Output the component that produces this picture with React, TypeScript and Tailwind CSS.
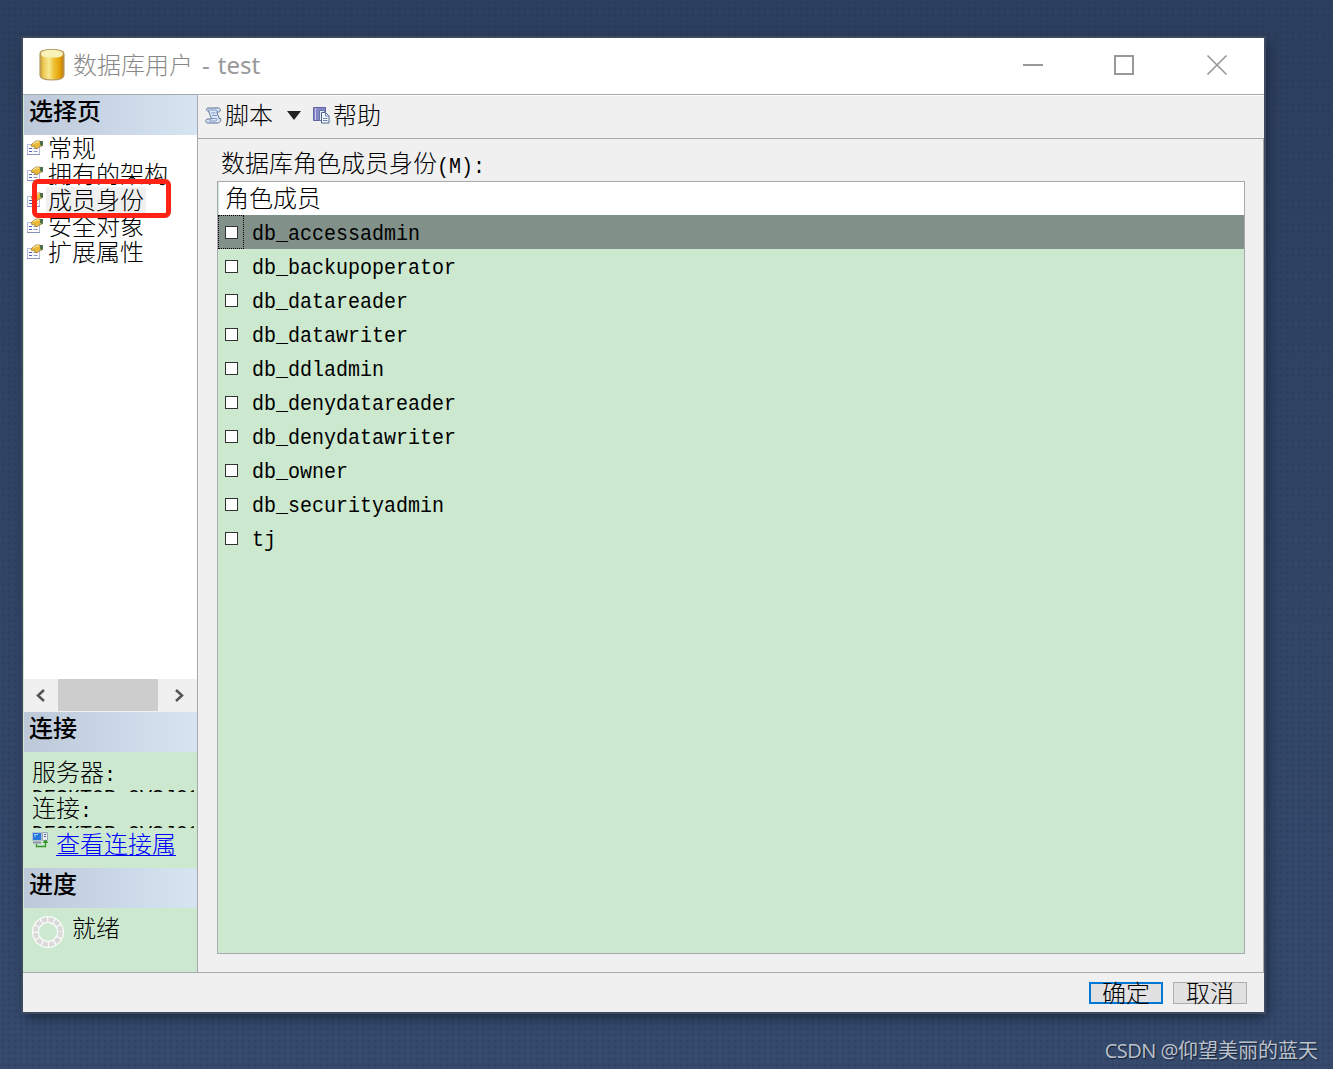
import { ReactNode, useState } from "react";
import clsx from "clsx";

const pages = ["常规", "拥有的架构", "成员身份", "安全对象", "扩展属性"];

const roles = [
  "db_accessadmin",
  "db_backupoperator",
  "db_datareader",
  "db_datawriter",
  "db_ddladmin",
  "db_denydatareader",
  "db_denydatawriter",
  "db_owner",
  "db_securityadmin",
  "tj",
];

const DatabaseIcon = () => (
  <svg width="26" height="34" viewBox="0 0 26 34" className="-translate-y-px">
    <defs>
      <linearGradient id="dbBody">
        <stop offset="0" stopColor="#c99a35" />
        <stop offset="0.15" stopColor="#edcb55" />
        <stop offset="0.38" stopColor="#f7e993" />
        <stop offset="0.55" stopColor="#f0c640" />
        <stop offset="0.82" stopColor="#e5a105" />
        <stop offset="1" stopColor="#b97a18" />
      </linearGradient>
    </defs>
    <path
      d="M1 6C1 3 5 1.500 13 1.500S25 3 25 6v21c0 3-4 5-12 5S1 30 1 27z"
      fill="url(#dbBody)"
      stroke="#b39a68"
      strokeWidth="1.200"
    />
    <path d="M2 6c0-3 5-4 11-4s11 1 11 4-5 3.500-11 3.500S2 9 2 6z" fill="#f8f2b8" />
  </svg>
);

const PageIcon = () => (
  <svg width="17" height="16" viewBox="0 0 17 16" className="shrink-0 translate-x-px">
    <path d="M.5 4.500h12v10H.5z" fill="#fff" stroke="#b3b9d8" />
    <path d="M0 14.500h13" stroke="#8790b8" />
    <path d="M2 8.500h3M2 11.500h3" stroke="#4c61b5" />
    <path d="M6.500 8.500h4M6.500 11.500h4" stroke="#8d97bd" />
    <path
      d="M4 5l2-2 3-2h4l2 1v4l-3 1-2 2-2-1-1-2-2 1z"
      fill="#eab93c"
      stroke="#97752c"
      strokeWidth="0.700"
    />
    <path d="M6 4l3-2h3" stroke="#fff2ac" fill="none" />
    <path d="M13 1h3v5l-3-1z" fill="#4b714c" />
  </svg>
);

const ScriptIcon = () => (
  <svg width="17" height="17" viewBox="0 0 17 17" className="shrink-0">
    <path
      d="M3 1h10.500c2.500 0 2.500 4 0 4H12c0 2.500 2 4 2 6.500h1.500c1 2-.5 4.500-3 4.500H3c-3 0-3-4 0-4h3.500C6 9.500 4 7 4 4.500 1 4.500 1 1 3 1z"
      fill="#dce8f8"
      stroke="#5b6f97"
    />
    <path d="M3 3h8.500M12 3v2M6 6h4.500M7 8.500h5M4 14h6.500c1.500 0 2-2.500.5-2.500H7" stroke="#7d95c0" fill="none" />
  </svg>
);

const HelpIcon = () => (
  <svg width="17" height="17" viewBox="0 0 17 17" className="shrink-0">
    <path d="M.5.5h12v13H.5z" fill="#8585c8" stroke="#6262a8" />
    <path d="M2.500 1v12" stroke="#c8c8ef" />
    <path d="M6.500 3.500h5v10h-5z" fill="#e6eefb" stroke="#6278a0" />
    <path d="M8.500 5.500h4l3.500 3.500v7H8.500z" fill="#f5f9ff" stroke="#4d678c" />
    <path d="M12.500 5.500V9H16M10 11.500h4.500M10 13.500h4.500" stroke="#6b84aa" fill="none" />
  </svg>
);

const ConnectionIcon = () => (
  <svg width="17" height="17" viewBox="0 0 17 17" className="shrink-0">
    <path d="M.5.5h9v8h-9z" fill="#2878dc" stroke="#b7c2d5" />
    <path d="M2 2.500h4M2 4h2" stroke="#8fd0ff" />
    <path d="M1 10.500h8" stroke="#8b93a6" strokeWidth="2" />
    <path d="M10.500.5h5v8h-5z" fill="#e9edf2" stroke="#9aa5b5" />
    <path d="M12 2.500h2M12 4.500h2" stroke="#5b6780" />
    <path d="M4.500 12v2.500h9V10" stroke="#33952a" strokeWidth="1.300" fill="none" />
    <path d="M10.500 11l3-3.500 3 3.500z" fill="#33952a" />
  </svg>
);

const ProgressIcon = () => (
  <svg width="32" height="32" viewBox="0 0 32 32" className="shrink-0">
    <circle cx="16" cy="16" r="12.500" fill="none" stroke="#fbfbfb" strokeWidth="7" />
    <circle
      cx="16"
      cy="16"
      r="12.500"
      fill="none"
      stroke="#d9d9d9"
      strokeWidth="4.600"
      strokeDasharray="5.300 1.245"
    />
  </svg>
);

const SectionHeader = ({ children }: { children: ReactNode }) => (
  <h2 className="h-10 shrink-0 bg-linear-to-r from-[#bdc9d9] to-[#d7e4f2] pt-[2px] pl-[5px] text-2xl leading-[34px] font-medium">
    {children}
  </h2>
);

const TitleBar = () => (
  <header className="flex h-14 shrink-0 items-center bg-white pr-9 pl-4 text-[#999]">
    <DatabaseIcon />
    <h1 className="mb-[3px] ml-2 font-['Noto_Sans','Noto_Sans_CJK_SC',sans-serif] text-2xl font-normal">
      <span className="font-['Noto_Sans_CJK_SC',sans-serif] font-light text-[#888]">数据库用户</span>
      <span className="ml-[9px]">-</span>
      <span className="ml-2">test</span>
    </h1>
    <svg
      width="206"
      height="22"
      viewBox="0 0 206 22"
      className="ml-auto -translate-y-px"
      fill="none"
      stroke="#999"
    >
      <path d="M1 11h20M93 2h18v18H93z" strokeWidth="2" />
      <path d="M185.500 1.500l19 19M204.500 1.500l-19 19" strokeWidth="1.700" />
    </svg>
  </header>
);

const Arrow = ({ d }: { d: string }) => (
  <svg width="34" height="32" viewBox="0 0 34 32" className="shrink-0" fill="none">
    <path d={d} stroke="#555" strokeWidth="2.500" />
  </svg>
);

const Sidebar = () => {
  const [page, setPage] = useState(2);

  return (
    <aside className="flex w-[175px] shrink-0 flex-col border-r border-[#a7a9ae] bg-[#cce8cf] pl-px">
      <SectionHeader>选择页</SectionHeader>
      <nav className="relative flex-1 bg-white">
        {pages.map((name, i) => (
          <button
            key={name}
            className="flex h-[26px] w-full items-center pl-[2px] text-left"
            onClick={() => setPage(i)}
          >
            <PageIcon />
            <span
              className={clsx(
                "ml-[3px] h-[26px] px-[2px] pt-[3px] text-2xl leading-[26px] whitespace-nowrap",
                page === i && "bg-[#f0f0f0]"
              )}
            >
              {name}
            </span>
          </button>
        ))}
        {/* Highlight drawn around the membership page */}
        <div className="absolute top-11 left-2 h-[39px] w-[139px] rounded-md border-[5px] border-[#ff2315]" />
      </nav>
      <div className="flex h-[33px] shrink-0 items-stretch bg-[#f0f0f0] pb-px">
        <Arrow d="M20 11l-6 5.500 6 5.500" />
        <div className="w-[100px] bg-[#cdcdcd]" />
        <Arrow d="M18 11l6 5.500-6 5.500" />
      </div>

      <SectionHeader>连接</SectionHeader>
      <div className="h-[116px] shrink-0 pt-1 pl-2 text-2xl">
        {["服务器", "连接"].map((label) => (
          <div key={label} className="h-9 overflow-hidden">
            <p className="h-[31px] pt-[3px] leading-[31px]">
              {label}
              <span className="text-xl">:</span>
            </p>
            <p className="w-[162px] overflow-hidden text-xl leading-[21px] whitespace-nowrap">
              DESKTOP-OVSJO6
            </p>
          </div>
        ))}
        <div className="flex pt-1">
          <ConnectionIcon />
          <a href="#" className="ml-[7px] pt-px leading-7 text-[#0000ff] underline decoration-1 underline-offset-2">
            查看连接属
          </a>
        </div>
      </div>

      <SectionHeader>进度</SectionHeader>
      <div className="flex h-16 shrink-0 items-start pt-2 pl-2 text-2xl">
        <ProgressIcon />
        <span className="ml-2 pt-[2px] leading-[26px]">就绪</span>
      </div>
    </aside>
  );
};

const Toolbar = () => (
  <div className="flex h-11 shrink-0 items-center border-t border-b border-t-white border-b-[#a7a9ae] pb-1 pl-[7px] text-2xl">
    <ScriptIcon />
    <span className="ml-[3px] pt-[5px]">脚本</span>
    <svg width="14" height="9" viewBox="0 0 14 9" className="mr-3 ml-[14px]">
      <path d="M0 0h14L7 9z" fill="#222" />
    </svg>
    <HelpIcon />
    <span className="ml-[3px] pt-[5px]">帮助</span>
  </div>
);

const RoleList = () => {
  const [checked, setChecked] = useState<string[]>([]);

  const toggle = (role: string) =>
    setChecked(
      checked.includes(role) ? checked.filter((r) => r !== role) : [...checked, role]
    );

  return (
    <div className="flex-1 border border-[#a7a9ae] bg-[#cce8cf]">
      <div className="ml-px h-[33px] bg-white pt-[2px] pl-[6px] text-2xl leading-[33px]">
        角色成员
      </div>
      {roles.map((role, i) => (
        <label
          key={role}
          className={clsx("flex h-[34px] items-center", i === 0 && "bg-[#819088]")}
        >
          <span
            className={clsx(
              "flex h-full w-[26px] items-center border pl-[6px]",
              i === 0 ? "border-dotted border-black" : "border-transparent"
            )}
          >
            <input
              type="checkbox"
              checked={checked.includes(role)}
              onChange={() => toggle(role)}
              className="size-[13px] appearance-none border border-[#333] bg-white checked:bg-[#0078d7]"
            />
          </span>
          <span className="ml-2 scale-y-110 pt-[3px] text-xl leading-[31px]">{role}</span>
        </label>
      ))}
    </div>
  );
};

const App = () => (
  <div className="h-[1069px] w-[1333px] bg-linear-to-b from-[#2d3f5e] to-[#354a6d]">
    <div className="flex h-full w-full flex-col items-start bg-[radial-gradient(#1f315040_1px,transparent_2px)] bg-size-[6px_6px] pt-[38px] pl-[23px] font-['Liberation_Mono','Noto_Sans_CJK_SC',monospace] font-light text-black">
      <div className="flex h-[974px] w-[1241px] shrink-0 flex-col bg-[#f0f0f0] shadow-[0_0_0_2px_#3d4a60,3px_5px_12px_#1a263c]">
        <TitleBar />
        <div className="flex h-[879px] shrink-0 border-t border-b border-[#a7a9ae]">
          <Sidebar />
          <main className="flex flex-1 flex-col">
            <Toolbar />
            <div className="flex flex-1 flex-col border-r border-[#a7a9ae] pr-[18px] pb-[18px] pl-[19px]">
              <p className="h-[42px] pt-[2px] pl-1 text-2xl leading-[50px]">
                数据库角色成员身份
                <span className="inline-block scale-y-110 text-xl leading-6">(M):</span>
              </p>
              <RoleList />
            </div>
          </main>
        </div>
        <footer className="flex justify-end gap-[10px] pt-[9px] pr-[17px] text-2xl">
          <button className="h-[22px] w-[74px] border-2 border-[#0078d7] bg-[#e1e1e1] pt-px leading-[21px]">
            确定
          </button>
          <button className="h-[22px] w-[74px] border border-[#adadad] bg-[#e1e1e1] pt-[2px] leading-[22px]">
            取消
          </button>
        </footer>
      </div>
      <p className="mt-[25px] mr-[15px] self-end font-['Open_Sans','Noto_Sans_CJK_SC',sans-serif] text-xl font-normal text-[#bcc2cb] [text-shadow:1px_1px_1px_#17233a]">
        <span className="tracking-[-0.5px]">CSDN @</span>仰望美丽的蓝天
      </p>
    </div>
  </div>
);

export default App;
